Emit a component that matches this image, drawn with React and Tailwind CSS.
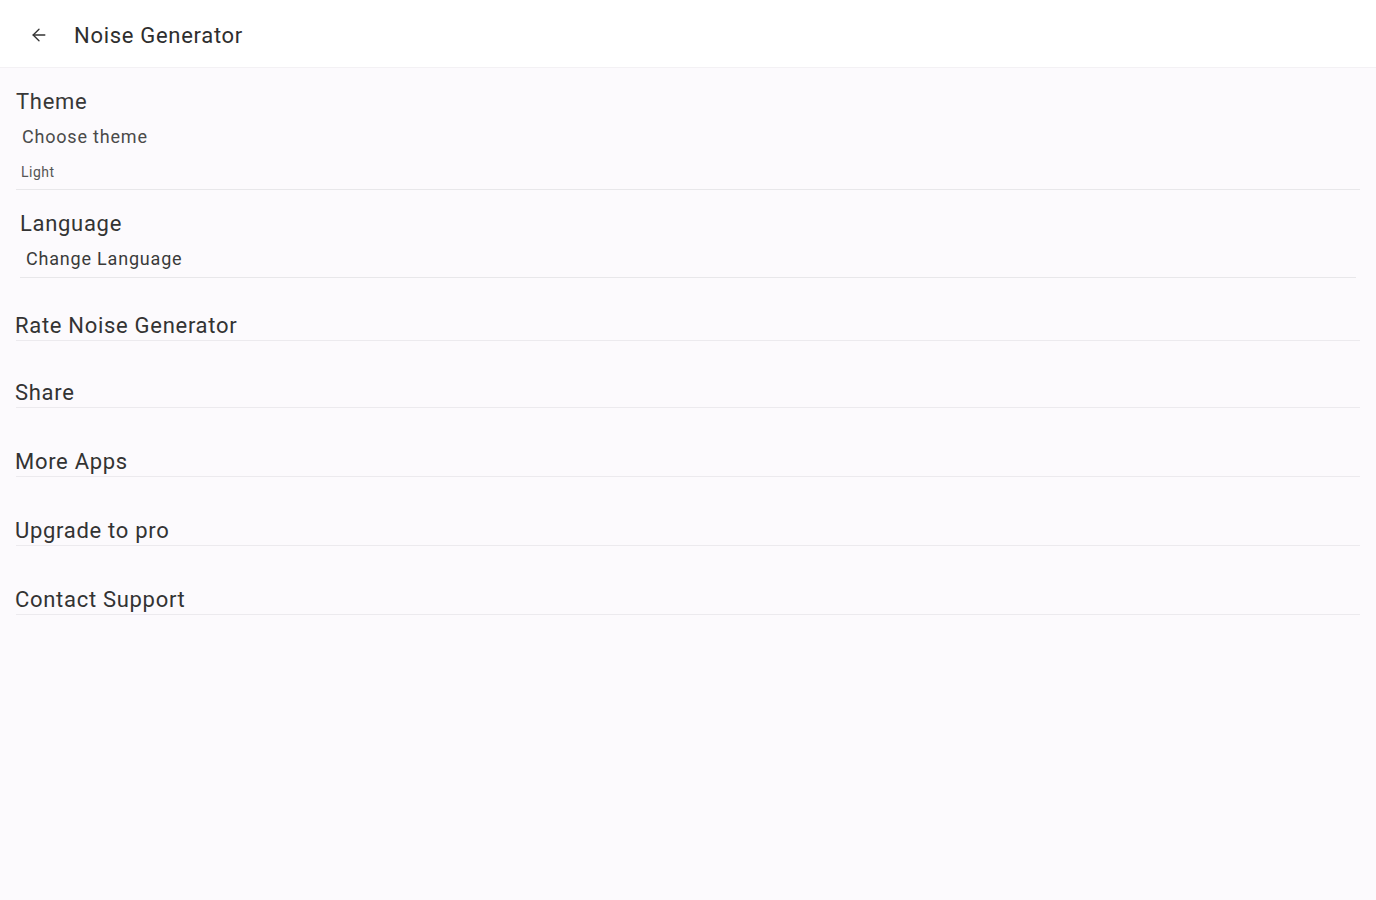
import React from 'react';
import { ArrowLeft } from 'lucide-react';

const simpleItems = [
  { label: 'Rate Noise Generator', pad: 'pt-[35px]' },
  { label: 'Share', pad: 'pt-[39px]' },
  { label: 'More Apps', pad: 'pt-[41px]' },
  { label: 'Upgrade to pro', pad: 'pt-[41px]' },
  { label: 'Contact Support', pad: 'pt-[41px]' },
];

export default function App() {
  return (
    <div className="min-h-[900px] bg-[#fcfafd] font-['Roboto',sans-serif] text-[#2b2b2b]">
      {/* Toolbar */}
      <div className="h-[68px] bg-white flex items-center border-b border-[#f3f1f4]">
        <ArrowLeft className="w-5 h-5 ml-[29px] mt-[3px] text-[#333]" strokeWidth={1.6} />
        <h1 className="ml-[25px] mt-[3px] text-[22px] tracking-[0.7px] text-[#2e2e2e]">Noise Generator</h1>
      </div>

      {/* Theme */}
      <div className="pt-[21px] mx-4 border-b border-[#e8e7ea]">
        <div className="text-[22px] leading-[26px] tracking-[0.7px] text-[#383838]">Theme</div>
        <div className="mt-[11px] ml-[6px] text-[18px] leading-[22px] tracking-[0.8px] text-[#4a4a4a]">Choose theme</div>
        <div className="mt-[15px] ml-[5px] pb-[8px] text-[14px] leading-[18px] tracking-[0.5px] text-[#555]">Light</div>
      </div>

      {/* Language */}
      <div className="pt-[21px] ml-5 mr-5 border-b border-[#e8e7ea]">
        <div className="text-[22px] leading-[26px] tracking-[0.7px] text-[#333]">Language</div>
        <div className="mt-[11px] ml-[6px] pb-[7px] text-[18px] leading-[22px] tracking-[0.8px] text-[#3a3a3a]">Change Language</div>
      </div>

      {simpleItems.map(({ label, pad }) => (
        <div key={label} className={`${pad} mx-4 pb-px border-b border-[#eceaee]`}>
          <div className="-ml-px text-[22px] leading-[26px] tracking-[0.7px] text-[#333]">{label}</div>
        </div>
      ))}
    </div>
  );
}
